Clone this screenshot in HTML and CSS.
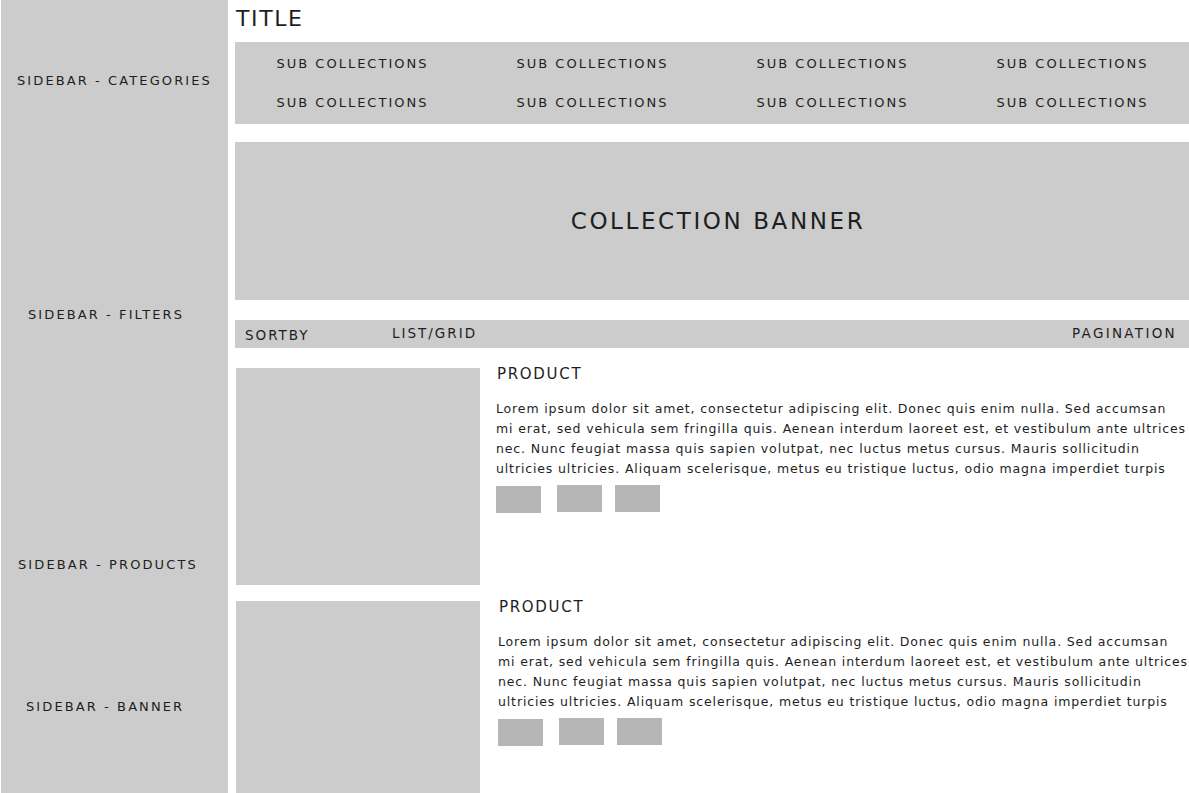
FILE: index.html
```html
<!DOCTYPE html>
<html>
<head>
<meta charset="utf-8">
<link rel="stylesheet" href="styles.css">
</head>
<body>
<div class="page">
  <aside class="sidebar">
    <div class="side-item side-categories">SIDEBAR - CATEGORIES</div>
    <div class="side-item side-filters">SIDEBAR - FILTERS</div>
    <div class="side-item side-products">SIDEBAR - PRODUCTS</div>
    <div class="side-item side-banner">SIDEBAR - BANNER</div>
  </aside>
  <main class="main">
    <h1 class="title">TITLE</h1>
    <div class="subs">
      <span>SUB COLLECTIONS</span><span>SUB COLLECTIONS</span><span>SUB COLLECTIONS</span><span>SUB COLLECTIONS</span>
      <span>SUB COLLECTIONS</span><span>SUB COLLECTIONS</span><span>SUB COLLECTIONS</span><span>SUB COLLECTIONS</span>
    </div>
    <div class="banner">COLLECTION BANNER</div>
    <div class="toolbar">
      <span class="sort">SORTBY</span>
      <span class="view">LIST/GRID</span>
      <span class="pagination">PAGINATION</span>
    </div>
    <div class="product product-first">
      <div class="product-img"></div>
      <div class="product-info">
        <h2 class="product-name">PRODUCT</h2>
        <p class="product-desc">Lorem ipsum dolor sit amet, consectetur adipiscing elit. Donec quis enim nulla. Sed accumsan<br>mi erat, sed vehicula sem fringilla quis. Aenean interdum laoreet est, et vestibulum ante ultrices<br>nec. Nunc feugiat massa quis sapien volutpat, nec luctus metus cursus. Mauris sollicitudin<br>ultricies ultricies. Aliquam scelerisque, metus eu tristique luctus, odio magna imperdiet turpis</p>
        <div class="swatches">
          <span class="swatch swatch-low"></span><span class="swatch"></span><span class="swatch swatch-last"></span>
        </div>
      </div>
    </div>
    <div class="product product-second">
      <div class="product-img"></div>
      <div class="product-info">
        <h2 class="product-name">PRODUCT</h2>
        <p class="product-desc">Lorem ipsum dolor sit amet, consectetur adipiscing elit. Donec quis enim nulla. Sed accumsan<br>mi erat, sed vehicula sem fringilla quis. Aenean interdum laoreet est, et vestibulum ante ultrices<br>nec. Nunc feugiat massa quis sapien volutpat, nec luctus metus cursus. Mauris sollicitudin<br>ultricies ultricies. Aliquam scelerisque, metus eu tristique luctus, odio magna imperdiet turpis</p>
        <div class="swatches">
          <span class="swatch swatch-low"></span><span class="swatch"></span><span class="swatch swatch-last"></span>
        </div>
      </div>
    </div>
  </main>
</div>
</body>
</html>
```

FILE: styles.css
```css
* { box-sizing: border-box; }
html, body { margin: 0; padding: 0; background: #fff; }
body {
  font-family: "DejaVu Sans", "Noto Sans", sans-serif;
  color: #1e1e1e;
  width: 1189px;
  height: 793px;
  overflow: hidden;
}
.page {
  display: flex;
  gap: 7px;
  padding-left: 1px;
  height: 793px;
}
.sidebar {
  width: 227px;
  flex: none;
  background: #cccccc;
  font-size: 13px;
  letter-spacing: 2.1px;
  line-height: 16px;
}
.side-item { white-space: nowrap; }
.side-categories { padding: 73px 0 0 16px; }
.side-filters { padding: 218px 0 0 27px; }
.side-products { padding: 234px 0 0 17px; }
.side-banner { padding: 126px 0 0 25px; }

.main {
  flex: 1;
  display: flex;
  flex-direction: column;
}
.main > * { flex: none; }
.title {
  margin: 0;
  font-weight: normal;
  font-size: 22px;
  letter-spacing: 1.6px;
  line-height: 26px;
  height: 42px;
  padding: 6px 0 0 1px;
}
.subs {
  background: #cccccc;
  height: 82px;
  display: grid;
  grid-template-columns: repeat(4, 240px);
  row-gap: 19px;
  padding: 12px 0 0;
  font-size: 13px;
  letter-spacing: 2px;
  line-height: 20px;
  text-align: center;
  align-content: start;
  overflow: hidden;
}
.subs span { padding-right: 5px; white-space: nowrap; }
.banner {
  margin-top: 18px;
  height: 158px;
  background: #cccccc;
  display: flex;
  align-items: center;
  justify-content: center;
  font-size: 23px;
  letter-spacing: 2.6px;
  padding-left: 6px;
}
.toolbar {
  margin-top: 20px;
  height: 28px;
  background: #cccccc;
  display: flex;
  align-items: center;
  font-size: 13.5px;
  letter-spacing: 2px;
  padding: 0 18px 2px 10px;
}
.sort { padding-top: 3px; width: 147px; }
.view { padding-bottom: 1px; }
.pagination { margin-left: auto; letter-spacing: 2.3px; }

.product {
  display: flex;
  gap: 16px;
  padding-left: 1px;
}
.product-first { margin-top: 20px; height: 217px; }
.product-second { margin-top: 16px; height: 200px; }
.product-img {
  width: 244px;
  flex: none;
  background: #cccccc;
}
.product-second .product-info { padding-left: 2px; }
.product-name {
  margin: -4px 0 0;
  font-weight: normal;
  font-size: 15px;
  letter-spacing: 1.7px;
  line-height: 20px;
  padding-left: 1px;
}
.product-desc {
  margin: 15px 0 0;
  font-size: 12.5px;
  letter-spacing: 0.86px;
  line-height: 20px;
  white-space: nowrap;
}
.swatches {
  display: flex;
  align-items: flex-start;
  margin-top: 6px;
}
.swatch {
  width: 45px;
  height: 27px;
  background: #b6b6b6;
  margin-right: 16px;
}
.swatch-low { margin-top: 1px; }
.swatch-last { margin-left: -3px; }
```
